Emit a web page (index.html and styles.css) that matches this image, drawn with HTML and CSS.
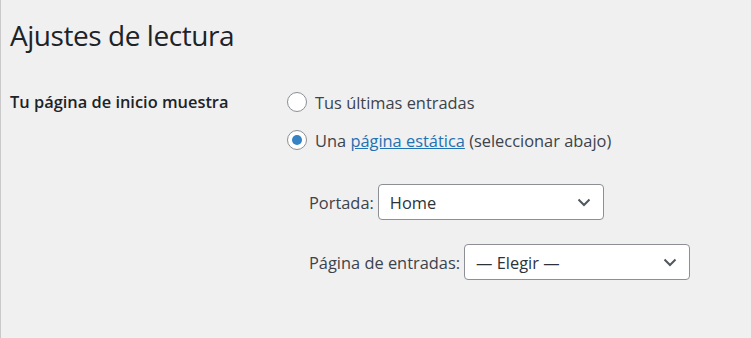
FILE: index.html
```html
<!DOCTYPE html>
<html lang="es">
<head>
  <meta charset="UTF-8">
  <title>Ajustes de lectura</title>
  <link rel="stylesheet" href="styles.css">
</head>
<body class="wrap">
  <h1 class="title">Ajustes de lectura</h1>

  <div class="row">
    <div class="row-label">Tu página de inicio muestra</div>
    <div class="row-field">
      <label class="choice">
        <span class="radio"></span>
        Tus últimas entradas
      </label>
      <label class="choice">
        <span class="radio checked"></span>
        <span>Una <a href="#">página estática</a> (seleccionar abajo)</span>
      </label>

      <div class="pages">
        <div class="page-line">
          <span>Portada:</span>
          <div class="fake-select">
            <span>Home</span>
            <svg width="14" height="9" viewBox="0 0 14 9"><path d="M1.5 1.5 L7 7 L12.5 1.5" fill="none" stroke="#50575e" stroke-width="2"/></svg>
          </div>
        </div>
        <div class="page-line">
          <span>Página de entradas:</span>
          <div class="fake-select">
            <span>— Elegir —</span>
            <svg width="14" height="9" viewBox="0 0 14 9"><path d="M1.5 1.5 L7 7 L12.5 1.5" fill="none" stroke="#50575e" stroke-width="2"/></svg>
          </div>
        </div>
      </div>
    </div>
  </div>
</body>
</html>
```

FILE: styles.css
```css
html{
  background:#f0f0f1;
}
.wrap{
  margin:0;
  min-height:338px;
  box-sizing:border-box;
  border-left:1px solid #c9c9c9;
  padding:0 0 0 9px;
  font-family:"Open Sans", "Noto Sans", sans-serif;
  font-size:16.4px;
  color:#3c434a;
}
.title{
  margin:0;
  padding:16px 0 0;
  font-size:28px;
  font-weight:400;
  line-height:38px;
  color:#1d2327;
  letter-spacing:-0.45px;
}
.row{
  display:flex;
  margin-top:37px;
}
.row-label{
  width:277px;
  font-weight:600;
  font-size:16.4px;
  color:#1d2327;
  line-height:22px;
}
.row-field{
  display:flex;
  flex-direction:column;
}
.choice{
  display:flex;
  align-items:center;
  gap:8px;
  height:22px;
  margin-bottom:16px;
}
.choice a{
  color:#2271b1;
}
.radio{
  width:18px;
  height:18px;
  border:1px solid #8c8f94;
  border-radius:50%;
  background:#fff;
  display:flex;
  align-items:center;
  justify-content:center;
}
.radio.checked::after{
  content:"";
  width:10px;
  height:10px;
  border-radius:50%;
  background:#3582c4;
}
.pages{
  display:flex;
  flex-direction:column;
  gap:24px;
  padding:17px 0 0 22px;
}
.page-line{
  display:flex;
  align-items:center;
  gap:4px;
}
.fake-select{
  width:226px;
  height:36px;
  box-sizing:border-box;
  border:1px solid #8c8f94;
  border-radius:4px;
  background:#fff;
  display:flex;
  align-items:center;
  justify-content:space-between;
  padding:0 12px 0 11px;
  color:#2c3338;
}
```
